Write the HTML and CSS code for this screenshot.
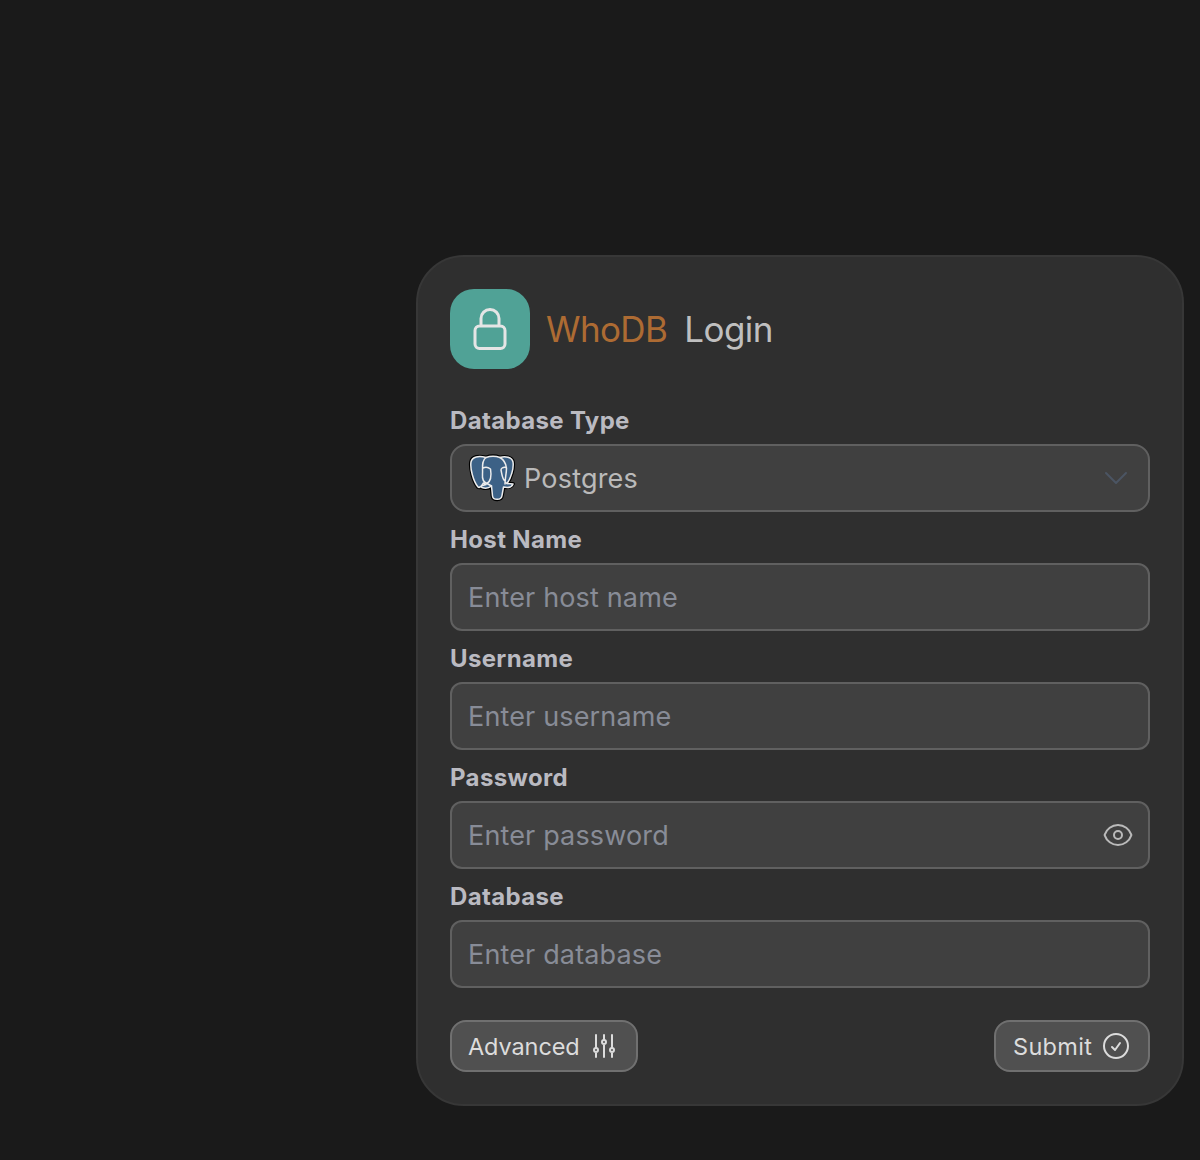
FILE: index.html
```html
<!DOCTYPE html>
<html lang="en">
<head>
<meta charset="utf-8">
<title>WhoDB Login</title>
<link rel="stylesheet" href="styles.css">
</head>
<body>
<main class="page">
  <form class="card">
    <header class="header">
      <div class="logo">
        <svg class="lock" viewBox="0 0 24 24"><path d="M16.5 10.5V6.75a4.5 4.5 0 1 0-9 0v3.75m-.75 11.25h10.5a2.25 2.25 0 0 0 2.25-2.25v-6.75a2.25 2.25 0 0 0-2.25-2.25H6.75a2.25 2.25 0 0 0-2.25 2.25v6.75a2.25 2.25 0 0 0 2.25 2.25Z"/></svg>
      </div>
      <h1 class="title"><span class="brand">WhoDB</span><span class="word">Login</span></h1>
    </header>

    <div class="fields">
      <div class="field">
        <span class="label">Database Type</span>
        <div class="control select">
          <svg class="elephant" viewBox="0 0 48 48">
            <path class="halo" d="M18 3.500C11 1.500 4 2.500 3 8C2 14 5 27 10 33C12 34.500 14 31 15.500 29L18 30.500C14 31.500 12 32.500 14 33.500C18 35 21 34 23.500 32L24.500 42C25 46.500 33.500 46.500 34 41.500L35.500 33C40 34 44 33 45 30L39 29.500C43 24 46 14 45 8C44 3 37 2 32 3.500C28 2 22 2 18 3.500Z"/>
            <g class="body">
              <path d="M18 3.500C11 1.500 4 2.500 3 8C2 14 5 27 10 33C12 34.500 14 31 15.500 29L18 30.500C14 31.500 12 32.500 14 33.500C18 35 21 34 23.500 32L24.500 42C25 46.500 33.500 46.500 34 41.500L35.500 33C40 34 44 33 45 30L39 29.500C43 24 46 14 45 8C44 3 37 2 32 3.500C28 2 22 2 18 3.500Z"/>
              <path d="M18 3.500C13 7 15 14 14.500 20C14 25 15 28 19 29.500C23 27 23.500 21 22.500 15C20 13 17 13 15 14"/>
              <path d="M32 3.500C36 6 38 10 38.500 14C38.500 20 37 24 37 30M38 13.500C35 13 33 14 33 16C34 20 34 25 37 27M37 28L39 29.500M19 29.500L23.500 32"/>
            </g>
          </svg>
          <span class="value">Postgres</span>
          <svg class="icon chevron" viewBox="0 0 24 24"><path d="m19.5 8.25-7.5 7.5-7.5-7.5"/></svg>
        </div>
      </div>
      <div class="field">
        <label class="label" for="host">Host Name</label>
        <div class="control"><input class="input" id="host" placeholder="Enter host name"></div>
      </div>
      <div class="field">
        <label class="label" for="user">Username</label>
        <div class="control"><input class="input" id="user" placeholder="Enter username"></div>
      </div>
      <div class="field">
        <label class="label" for="pass">Password</label>
        <div class="control">
          <input class="input" id="pass" type="password" placeholder="Enter password">
          <svg class="icon" viewBox="0 0 24 24"><path d="M2.036 12.322a1.012 1.012 0 0 1 0-.639C3.423 7.51 7.36 4.5 12 4.5c4.638 0 8.573 3.007 9.963 7.178.07.207.07.431 0 .639C20.577 16.49 16.64 19.5 12 19.5c-4.638 0-8.573-3.007-9.963-7.178Z"/><path d="M15 12a3 3 0 1 1-6 0 3 3 0 0 1 6 0Z"/></svg>
        </div>
      </div>
      <div class="field">
        <label class="label" for="db">Database</label>
        <div class="control"><input class="input" id="db" placeholder="Enter database"></div>
      </div>
    </div>

    <footer class="actions">
      <button class="button advanced" type="button"><span class="caption">Advanced</span>
        <svg class="icon" viewBox="0 0 24 24"><path d="M6 13.5V3.75m0 9.75a1.5 1.5 0 0 1 0 3m0-3a1.5 1.5 0 0 0 0 3m0 3.75V16.5m12-3V3.75m0 9.75a1.5 1.5 0 0 1 0 3m0-3a1.5 1.5 0 0 0 0 3m0 3.75V16.5m-6-9V3.75m0 3.75a1.5 1.5 0 0 1 0 3m0-3a1.5 1.5 0 0 0 0 3m0 9.75V10.5"/></svg>
      </button>
      <button class="button submit" type="button"><span class="caption">Submit</span>
        <svg class="icon" viewBox="0 0 24 24"><path d="M9 12.75 11.25 15 15 9.75M21 12a9 9 0 1 1-18 0 9 9 0 0 1 18 0Z"/></svg>
      </button>
    </footer>
  </form>
</main>
</body>
</html>
```

FILE: styles.css
```css
* { box-sizing: border-box; }
body { margin: 0; background: #1a1a1a; font-family: Inter, "Liberation Sans", sans-serif; }
.page { height: 1160px; padding: 255px 16px 54px 416px; overflow: hidden; }
.card { height: 851px; padding: 32px; border: 2px solid #373737; border-radius: 48px; background: #2f2f2f; }
svg { display: block; flex: none; fill: none; stroke: currentColor; stroke-width: 1.5; stroke-linecap: round; stroke-linejoin: round; }
.header { display: flex; align-items: center; gap: 16px; height: 80px; }
.logo { display: grid; place-items: center; width: 80px; height: 80px; border-radius: 24px; background: #50a296; color: #e5e5e5; }
.lock { width: 48px; height: 48px; }
.title { display: flex; gap: 17px; margin: 0; font-size: 35px; font-weight: 400; line-height: 56px; letter-spacing: -0.6px; color: #bfbfbf; }
.brand { color: #ad6b33; }
.fields { padding-top: 24px; }
.field { height: 119px; }
.label { display: block; height: 51px; padding: 12px 0 0; font-size: 24px; font-weight: 700; line-height: 32px; letter-spacing: 0.35px; color: #babac1; }
.control { display: flex; align-items: center; height: 68px; padding: 0 14px 0 16px; border: 2px solid #606060; border-radius: 12px; background: #404040; color: #bababa; }
.select { border-radius: 16px; padding-right: 16px; }
.input { flex: 1; min-width: 0; height: 41px; padding: 1px 0 0; border: 0; outline: 0; background: transparent; color: inherit; font: 400 27px/40px Inter, "Liberation Sans", sans-serif; letter-spacing: 0.15px; }
.input::placeholder { color: #888c97; opacity: 1; }
.elephant { width: 48px; height: 48px; overflow: visible; }
.halo { fill: #000; stroke: #000; stroke-width: 3.8; }
.body { fill: #3c6186; stroke: #ececec; stroke-width: 1.5; }
.value { flex: 1; padding: 1px 0 0 8px; font-size: 27px; line-height: 40px; letter-spacing: 0.2px; }
.icon { width: 32px; height: 32px; }
.chevron { color: #4b5563; stroke-width: 1.5; }
.actions { display: flex; justify-content: space-between; padding-top: 32px; }
.button { display: flex; align-items: center; justify-content: space-between; height: 52px; padding: 0 16px; border: 2px solid #707070; border-radius: 16px; background: #505050; color: #dcdcdc; font: 400 23.5px/32px Inter, "Liberation Sans", sans-serif; }
.caption { padding-top: 2px; }
.advanced { width: 188px; letter-spacing: -0.1px; }
.submit { width: 156px; padding-left: 17px; letter-spacing: 0.3px; }
```
